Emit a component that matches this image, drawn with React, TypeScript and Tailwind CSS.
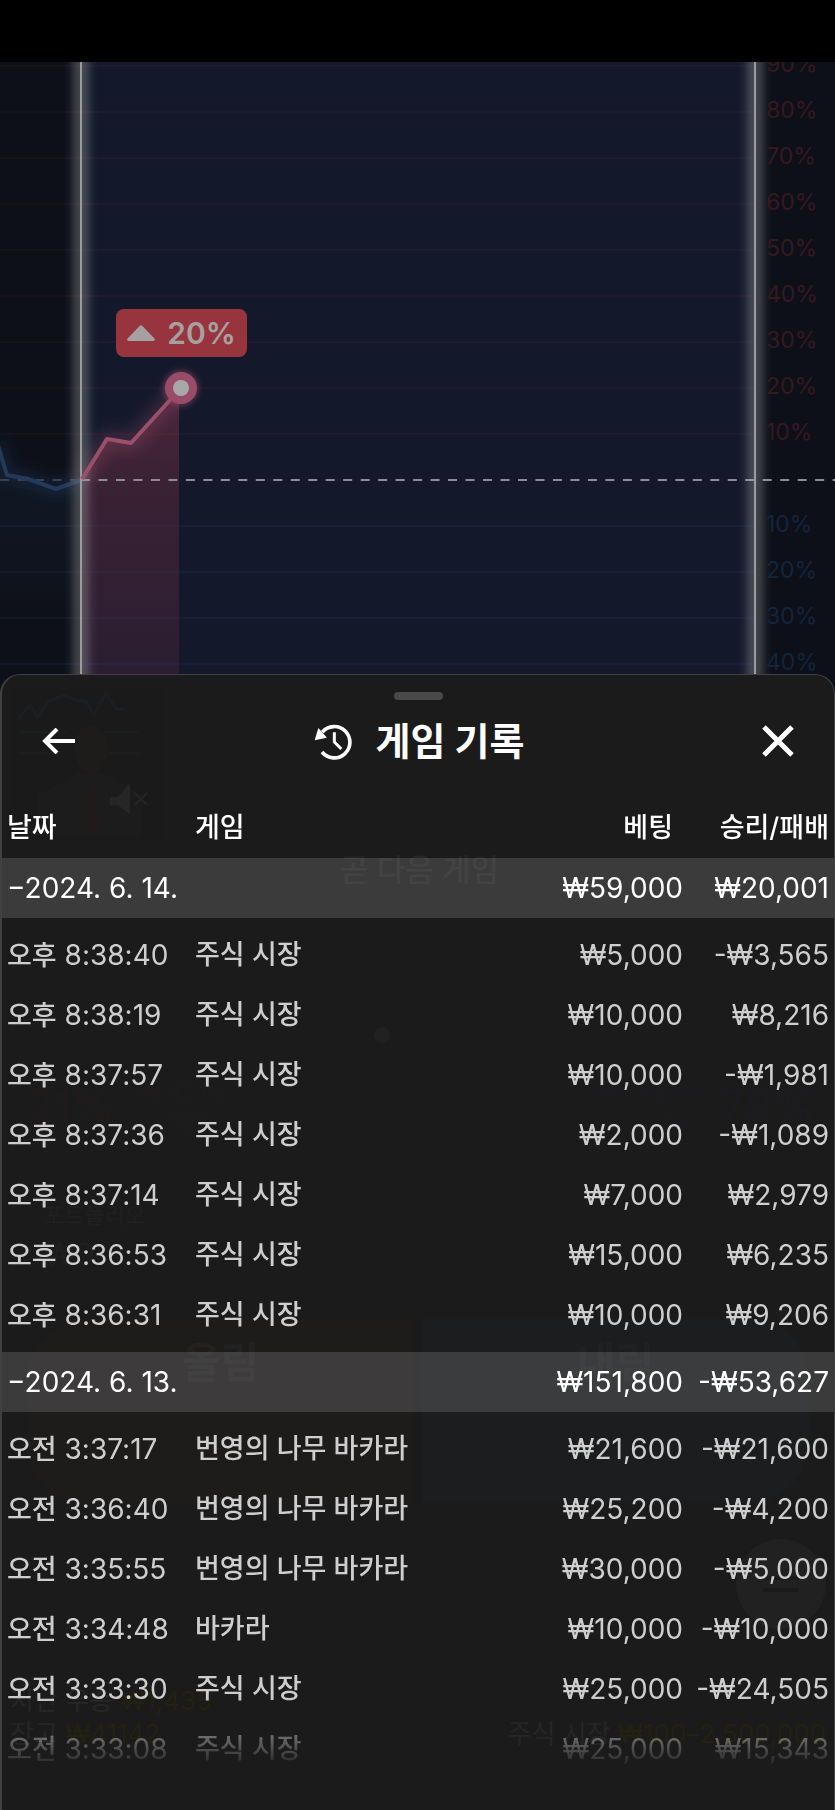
import * as React from 'react';

interface Entry {
  period: '오전' | '오후';
  time: string;
  game: string;
  bet: string;
  result: string;
}

interface Day {
  date: string;
  bet: string;
  result: string;
  entries: Entry[];
}

const days: Day[] = [
  {
    date: '2024. 6. 14.',
    bet: '₩59,000',
    result: '₩20,001',
    entries: [
      { period: '오후', time: '8:38:40', game: '주식 시장', bet: '₩5,000', result: '-₩3,565' },
      { period: '오후', time: '8:38:19', game: '주식 시장', bet: '₩10,000', result: '₩8,216' },
      { period: '오후', time: '8:37:57', game: '주식 시장', bet: '₩10,000', result: '-₩1,981' },
      { period: '오후', time: '8:37:36', game: '주식 시장', bet: '₩2,000', result: '-₩1,089' },
      { period: '오후', time: '8:37:14', game: '주식 시장', bet: '₩7,000', result: '₩2,979' },
      { period: '오후', time: '8:36:53', game: '주식 시장', bet: '₩15,000', result: '₩6,235' },
      { period: '오후', time: '8:36:31', game: '주식 시장', bet: '₩10,000', result: '₩9,206' },
    ],
  },
  {
    date: '2024. 6. 13.',
    bet: '₩151,800',
    result: '-₩53,627',
    entries: [
      { period: '오전', time: '3:37:17', game: '번영의 나무 바카라', bet: '₩21,600', result: '-₩21,600' },
      { period: '오전', time: '3:36:40', game: '번영의 나무 바카라', bet: '₩25,200', result: '-₩4,200' },
      { period: '오전', time: '3:35:55', game: '번영의 나무 바카라', bet: '₩30,000', result: '-₩5,000' },
      { period: '오전', time: '3:34:48', game: '바카라', bet: '₩10,000', result: '-₩10,000' },
      { period: '오전', time: '3:33:30', game: '주식 시장', bet: '₩25,000', result: '-₩24,505' },
      { period: '오전', time: '3:33:08', game: '주식 시장', bet: '₩25,000', result: '₩15,343' },
    ],
  },
];

// Percent steps on the axis, top to bottom
const levels = [90, 80, 70, 60, 50, 40, 30, 20, 10, 0, -10, -20, -30, -40];
const STEP = 46;
const ZERO_Y = 418;

function HistoryIcon() {
  return (
    <svg viewBox="0 0 114 111" className="h-[37px] w-[38px]" fill="none" stroke="currentColor" strokeWidth="11" aria-hidden="true">
      <path d="M25 27A47 47 0 1 1 24 87" />
      <path d="M61 28V57L82 78" strokeWidth="9" />
      <path d="M13 15L2 52L39 44Z" fill="currentColor" stroke="none" />
    </svg>
  );
}

/**
 * Marker line with a soft glow on both sides
 */
function Marker() {
  return (
    <>
      <rect x="-17" y="0" width="34" height="100%" fill="url(#glow)" />
      <rect x="-1" y="0" width="2" height="100%" fill="#9b9b9b" />
    </>
  );
}

function Chart() {
  return (
    <section className="relative flex h-[612px] justify-end overflow-hidden bg-[#0e1019]">
      <svg className="absolute inset-0 h-full w-full" aria-hidden="true">
        <defs>
          <linearGradient id="glow">
            <stop offset="0" stopColor="#aaa" stopOpacity="0" />
            <stop offset="0.15" stopColor="#aaa" stopOpacity="0.06" />
            <stop offset="0.35" stopColor="#aaa" stopOpacity="0.27" />
            <stop offset="0.5" stopColor="#aaa" stopOpacity="0.36" />
            <stop offset="0.65" stopColor="#aaa" stopOpacity="0.27" />
            <stop offset="0.85" stopColor="#aaa" stopOpacity="0.06" />
            <stop offset="1" stopColor="#aaa" stopOpacity="0" />
          </linearGradient>
          <linearGradient id="gain" x1="0" y1="326" x2="0" y2="612" gradientUnits="userSpaceOnUse">
            <stop offset="0" stopColor="#4a273d" />
            <stop offset="0.35" stopColor="#3a2134" />
            <stop offset="1" stopColor="#2b1e32" />
          </linearGradient>
          <linearGradient id="loss" x1="0" y1="380" x2="0" y2="560" gradientUnits="userSpaceOnUse">
            <stop offset="0" stopColor="#10151f" />
            <stop offset="0.4" stopColor="#101722" />
            <stop offset="1" stopColor="#0e1019" />
          </linearGradient>
          <filter id="blur" x="-50%" y="-50%" width="200%" height="200%">
            <feGaussianBlur stdDeviation="8" />
          </filter>
          <filter id="halo" x="-50%" y="-50%" width="200%" height="200%">
            <feGaussianBlur stdDeviation="3" />
          </filter>
        </defs>

        <path d="M0 390L7 413L28 417L56 427L81 418V612H0Z" fill="url(#loss)" />

        {/* Current round, between the two markers */}
        <svg x="81" width="100%" height="100%">
          <rect width="100%" height="100%" fill="#13192b" />
        </svg>

        <path d="M82 417L107 377L131 381L179 328V612H82Z" fill="url(#gain)" />
        <path d="M82 417L107 377L131 381L181 326" fill="none" stroke="#a04f6c" strokeOpacity="0.4" strokeWidth="12" filter="url(#blur)" />

        {levels.map((level, i) =>
          level === 0 ? null : (
            <line
              key={i}
              x1="0"
              x2="100%"
              y1={ZERO_Y + (i - 9) * STEP}
              y2={ZERO_Y + (i - 9) * STEP}
              stroke={level > 0 ? '#a03040' : '#2a4a80'}
              strokeOpacity={level > 0 ? 0.08 : 0.14}
              strokeWidth="2"
            />
          ),
        )}
        <svg x="100%" overflow="visible">
          <rect x="-80" width="80" height="612" fill="#0e1019" />
        </svg>

        <line x1="0" x2="81" y1={ZERO_Y} y2={ZERO_Y} stroke="#3b3e47" strokeWidth="2" strokeDasharray="9 8.5" />
        <line x1="81" x2="100%" y1={ZERO_Y} y2={ZERO_Y} stroke="#8d8d95" strokeWidth="2" strokeDasharray="9 8.48" />

        <path d="M-3 380L0 390L7 413L28 417L56 427L81 418" fill="none" stroke="#2f5080" strokeOpacity="0.35" strokeWidth="10" filter="url(#blur)" />
        <path d="M-3 380L0 390L7 413L28 417L56 427L81 418" fill="none" stroke="#243a5a" strokeWidth="4" strokeLinejoin="round" />

        <svg x="81" overflow="visible">
          <Marker />
        </svg>
        <svg x="100%" overflow="visible">
          <g transform="translate(-80 0)">
            <Marker />
          </g>
        </svg>

        <path d="M82 417L107 377L131 381L181 326" fill="none" stroke="#9c4f6b" strokeWidth="4" strokeLinejoin="round" />
        <circle cx="181" cy="326" r="17" fill="#a04f6c" fillOpacity="0.6" filter="url(#halo)" />
        <circle cx="181" cy="326" r="16" fill="#994c68" />
        <circle cx="181" cy="326" r="8" fill="#a8a8a8" />
      </svg>

      <div className="absolute left-[116px] top-[247px] flex h-[48px] w-[131px] items-center justify-center gap-3 rounded-lg bg-[#98343e] text-[30px] font-semibold text-[#a5a1a1]">
        <svg viewBox="0 0 28 16" className="h-4 w-7" fill="currentColor" aria-hidden="true">
          <path d="M12.6 1Q14 -.4 15.4 1L27.4 13.4Q28.6 16 26 16H2Q-.6 16 .6 13.4Z" />
        </svg>
        <span>20%</span>
      </div>

      <ul className="relative -mt-[21px] w-[69px] shrink-0 text-[23px] text-[#36191f]">
        {levels.map((level, i) => (
          <li key={i} className={level < 0 ? 'flex h-[46px] items-center text-[#14243c]' : 'flex h-[46px] items-center'}>
            {level !== 0 && `${Math.abs(level)}%`}
          </li>
        ))}
      </ul>
    </section>
  );
}

/**
 * The table screen below the sheet, which shows through it very faintly
 */
function Backdrop() {
  return (
    <div className="pointer-events-none absolute inset-0 overflow-hidden text-[#262626]" aria-hidden="true">
      <svg className="absolute left-0 top-0 h-[170px] w-[170px]" fill="none">
        <rect x="8" y="14" width="154" height="152" fill="#1a1a1b" />
        <path d="M16 44L28 30L36 42L46 26L62 20L76 26L84 26L92 40L104 18L114 34L122 34" stroke="#1c1f22" strokeWidth="3" />
        <path d="M16 57H64M16 78H56M100 57H136M104 78H138" stroke="#1b1e1d" strokeWidth="3" />
        <path d="M36 120L76 98L102 98L140 120V160H36Z" fill="#1c1c1c" />
        <ellipse cx="89" cy="74" rx="17" ry="24" fill="#1e1b1b" />
        <path d="M84 112H92L98 152L88 160L80 150Z" fill="#201a1a" />
        <path d="M108 122H116L128 108V140L116 130H108Z" fill="#262626" />
        <path d="M133 118L145 130M145 118L133 130" stroke="#262626" strokeWidth="2" />
      </svg>
      <div className="absolute left-[338px] top-[172px] text-[31px] font-medium text-[#252525]">곧 다음 게임</div>
      <div className="absolute left-[372px] top-[352px] h-4 w-4 rounded-full bg-[#212121]" />
      <div className="absolute left-[24px] top-[398px] text-[44px] text-[#1f1b1b]">21%</div>
      <div className="absolute left-[135px] top-[400px] text-[24px] text-[#1e1b1b]">₩.421M</div>
      <div className="absolute left-[167px] top-[430px] text-[24px] text-[#1e1b1b]">169</div>
      <div className="absolute right-[18px] top-[398px] text-[44px] text-[#1b1c21]">79%</div>
      <div className="absolute right-[128px] top-[400px] text-[24px] text-[#1b1c1f]">₩1.44M+</div>
      <div className="absolute right-[130px] top-[430px] text-[24px] text-[#1b1c1f]">240</div>
      <div className="absolute left-[42px] top-[524px] text-[22px] text-[#202020]">포트폴리오</div>
      <div className="absolute left-[42px] top-[556px] text-[32px] text-[#1f1f1f]">₩0</div>
      <div className="absolute left-[25px] right-[25px] top-[644px] flex h-[184px] gap-2 text-[42px] font-bold">
        <div className="flex-1 rounded-l-[60px] bg-[#1e1b1b] pt-3 text-center text-[#232222]">올림</div>
        <div className="flex-1 rounded-r-[60px] bg-[#1b1d1e] pt-3 text-center text-[#202222]">내림</div>
      </div>
      <div className="absolute right-[8px] top-[864px] flex h-[90px] w-[90px] flex-col items-center justify-center gap-2 rounded-full bg-[#212121]">
        <div className="h-1 w-9 bg-[#1a1a1a]" />
        <div className="h-1 w-9 bg-[#1a1a1a]" />
      </div>
      <div className="absolute left-[8px] top-[1006px] text-[26px]">
        지난 우승 <span className="text-[#23210f]">₩1,435</span>
      </div>
      <div className="absolute left-[8px] top-[1039px] text-[26px]">
        잔고 <span className="text-[#23210f]">₩41142</span>
      </div>
      <div className="absolute right-[8px] top-[1039px] text-[26px]">
        주식 시장 <span className="text-[#23210f]">₩100–2,500,000</span>
      </div>
    </div>
  );
}

function HistoryTable() {
  return (
    <table className="w-full table-fixed border-collapse whitespace-nowrap text-left text-[28px] text-[#cecece]">
      <colgroup>
        <col className="w-[193px]" />
        <col />
        <col className="w-[166px]" />
        <col className="w-[147px]" />
      </colgroup>
      <thead>
        <tr className="h-[60px] text-[27px] text-white">
          <th className="p-0 pl-[5px] font-medium">날짜</th>
          <th className="p-0 font-medium">게임</th>
          <th className="p-0 pr-[14px] text-right font-medium">베팅</th>
          <th className="p-0 pr-[5px] text-right font-medium">승리/패배</th>
        </tr>
      </thead>
      {days.map((day) => (
        <tbody key={day.date}>
          <tr className="h-[60px] bg-white/14 text-white">
            <td colSpan={2} className="p-0 pl-[5px]">−{day.date}</td>
            <td className="p-0 pr-1 text-right">{day.bet}</td>
            <td className="p-0 pr-[5px] text-right">{day.result}</td>
          </tr>
          <tr className="h-[7px]" aria-hidden="true" />
          {day.entries.map((entry) => (
            <tr key={entry.time} className="h-[60px]">
              <td className="p-0 pl-[5px]">
                <span className="text-[27px] font-medium">{entry.period}</span> {entry.time}
              </td>
              <td className="p-0 text-[27px] font-medium">{entry.game}</td>
              <td className="p-0 pr-1 text-right">{entry.bet}</td>
              <td className="p-0 pr-[5px] text-right">{entry.result}</td>
            </tr>
          ))}
          <tr className="h-[7px]" aria-hidden="true" />
        </tbody>
      ))}
    </table>
  );
}

export default function App() {
  return (
    <div className="flex min-h-screen flex-col bg-[#0e1019] font-['Inter','Noto_Sans_CJK_KR',sans-serif]">
      <div className="h-[62px] shrink-0 bg-black" />
      <Chart />

      <main className="relative flex flex-1 flex-col overflow-hidden rounded-t-[20px] border-l-2 border-r border-t border-[#414141] bg-[#1b1b1b]">
        <Backdrop />

        <div className="relative flex flex-col items-center pt-[17px]">
          <div className="h-2 w-[49px] rounded-full bg-[#494949]" />
          <header className="mb-4 flex h-[82px] w-full items-center justify-between px-10 text-white">
            <button type="button" aria-label="뒤로">
              <svg viewBox="0 0 34 26" className="h-[26px] w-[34px]" fill="none" stroke="currentColor" strokeWidth="4" aria-hidden="true">
                <path d="M33 13H3M15 1L3 13L15 25" />
              </svg>
            </button>
            <h1 className="flex items-center gap-6 text-[38px] font-bold">
              <HistoryIcon />
              게임 기록
            </h1>
            <button type="button" aria-label="닫기">
              <svg viewBox="0 0 32 32" className="h-8 w-8" fill="none" stroke="currentColor" strokeWidth="5" aria-hidden="true">
                <path d="M2 2L30 30M30 2L2 30" />
              </svg>
            </button>
          </header>
        </div>

        <div className="relative flex-1 mask-[linear-gradient(to_top,transparent_40px,black_114px)]">
          <HistoryTable />
        </div>
      </main>
    </div>
  );
}
